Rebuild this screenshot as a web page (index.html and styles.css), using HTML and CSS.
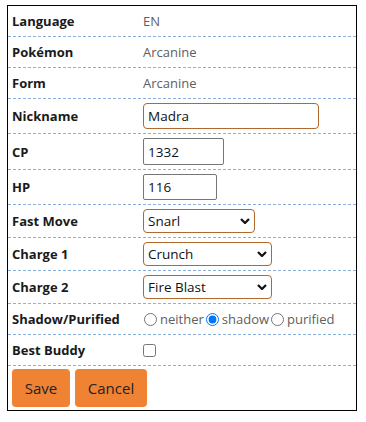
FILE: index.html
```html
<!DOCTYPE html>
<html>
<head>
<meta charset="utf-8">
<link rel="stylesheet" href="styles.css">
</head>
<body>
<form class="card">
  <div class="row"><div class="label">Language</div><div class="value">EN</div></div>
  <div class="row"><div class="label">Pokémon</div><div class="value">Arcanine</div></div>
  <div class="row"><div class="label">Form</div><div class="value">Arcanine</div></div>
  <div class="row"><div class="label">Nickname</div><div class="value"><input class="field field-nick" type="text" value="Madra"></div></div>
  <div class="row"><div class="label">CP</div><div class="value"><input class="field field-cp" type="text" value="1332"></div></div>
  <div class="row"><div class="label">HP</div><div class="value"><input class="field field-hp" type="text" value="116"></div></div>
  <div class="row"><div class="label">Fast Move</div><div class="value">
    <span class="sel sel-fast"><select><option>Snarl</option></select><svg class="chev" viewBox="0 0 10 6" width="10" height="6"><path d="M1 1 L5 5 L9 1" fill="none" stroke="#111" stroke-width="2.2"/></svg></span>
  </div></div>
  <div class="row"><div class="label">Charge 1</div><div class="value">
    <span class="sel sel-charge"><select><option>Crunch</option></select><svg class="chev" viewBox="0 0 10 6" width="10" height="6"><path d="M1 1 L5 5 L9 1" fill="none" stroke="#111" stroke-width="2.2"/></svg></span>
  </div></div>
  <div class="row"><div class="label">Charge 2</div><div class="value">
    <span class="sel sel-charge"><select><option>Fire Blast</option></select><svg class="chev" viewBox="0 0 10 6" width="10" height="6"><path d="M1 1 L5 5 L9 1" fill="none" stroke="#111" stroke-width="2.2"/></svg></span>
  </div></div>
  <div class="row"><div class="label">Shadow/Purified</div><div class="value radios">
    <label class="opt"><input type="radio" name="sp">neither</label>
    <label class="opt"><input type="radio" name="sp" checked>shadow</label>
    <label class="opt"><input type="radio" name="sp">purified</label>
  </div></div>
  <div class="row"><div class="label">Best Buddy</div><div class="value"><input class="check" type="checkbox"></div></div>
  <div class="actions">
    <button type="button" class="btn btn-save">Save</button>
    <button type="button" class="btn btn-cancel">Cancel</button>
  </div>
</form>
</body>
</html>
```

FILE: styles.css
```css
html, body {
  margin: 0;
  padding: 0;
  background: #fff;
}
body {
  font-family: "Open Sans", "Noto Sans", sans-serif;
  font-size: 13px;
  color: #222;
}
.card {
  margin: 5px 0 0 7px;
  width: 350px;
  box-sizing: border-box;
  border: 1px solid #000;
  padding: 0 0 3px 0;
}
.row {
  display: grid;
  grid-template-columns: 131px 1fr;
  align-items: center;
  padding: 4px 4px;
  border-bottom: 1px dashed #8ab0e0;
  min-height: 22px;
}
.label {
  font-weight: 700;
  color: #1a1a1a;
  font-size: 13px;
  line-height: 22px;
}
.value {
  color: #606060;
  line-height: 22px;
}
.field {
  box-sizing: border-box;
  font-family: inherit;
  font-size: 13.5px;
  color: #111;
  padding: 0 4px;
  margin: 0;
  border: 1px solid #767676;
  border-radius: 2px;
  background: #fff;
  display: block;
}
.field-nick {
  width: 176px;
  height: 26px;
  border-color: #b0682c;
  border-radius: 4px;
}
.field-cp {
  width: 81px;
  height: 27px;
}
.field-hp {
  width: 74px;
  height: 26px;
}
.sel {
  position: relative;
  display: block;
}
.sel select {
  appearance: none;
  -webkit-appearance: none;
  box-sizing: border-box;
  display: block;
  height: 24px;
  font-family: inherit;
  font-size: 13.5px;
  color: #111;
  background: #fff;
  border: 1px solid #b0682c;
  border-radius: 4px;
  padding: 0 4px;
  margin: 0;
}
.sel-fast select { width: 112px; }
.sel-charge select { width: 129px; }
.chev {
  position: absolute;
  top: 9px;
  pointer-events: none;
}
.sel-fast .chev { left: 97px; }
.sel-charge .chev { left: 114px; }
.radios {
  display: flex;
  align-items: center;
  gap: 1px;
}
.opt {
  display: flex;
  align-items: center;
  gap: 2px;
}
.opt input {
  margin: 0 1px 0 1px;
  width: 13px;
  height: 13px;
}
.check {
  margin: 0;
  width: 13px;
  height: 13px;
  display: block;
}
.actions {
  display: flex;
  gap: 5px;
  padding: 3px 4px 0 4px;
}
.btn {
  font-family: inherit;
  font-size: 15px;
  color: #222;
  background: #f08233;
  border: none;
  border-radius: 4px;
  height: 38px;
  margin: 0;
}
.btn-save {
  width: 58px;
  padding: 0;
}
.btn-cancel {
  width: 72px;
  padding: 0;
}
```
